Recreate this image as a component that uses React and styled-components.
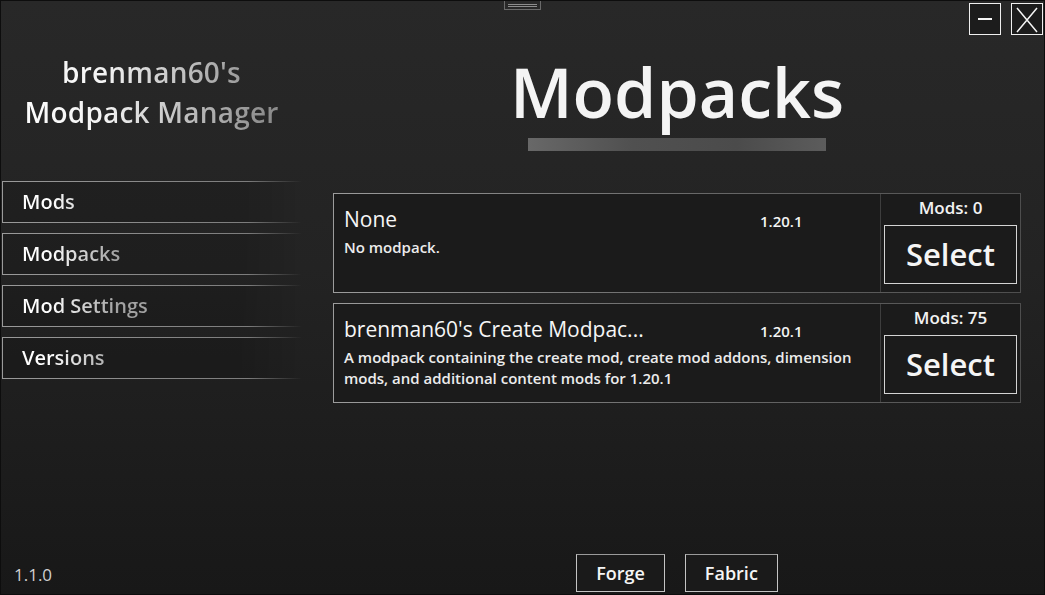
import React from "react";
import styled, { createGlobalStyle } from "styled-components";

const GlobalStyle = createGlobalStyle`
  html, body {
    margin: 0;
    padding: 0;
    background: #161616;
  }
  body {
    font-family: "Open Sans", "Noto Sans", sans-serif;
  }
  * {
    box-sizing: border-box;
  }
`;

const Window = styled.div`
  width: 1045px;
  height: 595px;
  border: 1px solid #0d0d0d;
  background: linear-gradient(to bottom, #282828 0%, #232323 45%, #181818 100%);
  display: grid;
  grid-template-columns: 332px 688px 1fr;
  grid-template-rows: 35px 1fr;
  color: #f3f3f3;
  overflow: hidden;
`;

const TopBar = styled.div`
  grid-column: 1 / -1;
  display: grid;
  grid-template-columns: 1fr auto 1fr;
  align-items: start;
`;

const Handle = styled.div`
  grid-column: 2;
  width: 37px;
  height: 9px;
  border: 1px solid #6a6a6a;
  border-top: none;
  display: flex;
  flex-direction: column;
  justify-content: center;
  gap: 1px;
  padding: 0 3px;

  span {
    height: 1px;
    background: #8c8c8c;
  }
`;

const Controls = styled.div`
  grid-column: 3;
  justify-self: end;
  display: flex;
  gap: 10px;
  margin: 2px 1px 0 0;
`;

const WinButton = styled.button`
  width: 32px;
  height: 32px;
  padding: 0;
  border: 1px solid #efefef;
  background: #1c1c1c;
  color: #f5f5f5;
  display: flex;
  align-items: center;
  justify-content: center;
`;

const Minus = styled.span`
  width: 14px;
  height: 2px;
  background: #f5f5f5;
`;

const CloseIcon = () => (
  <svg width="30" height="30" viewBox="0 0 30 30">
    <path d="M5 4 L25 28 M25 4 L5 28" stroke="#f5f5f5" strokeWidth="1.5" fill="none" />
  </svg>
);

const Sidebar = styled.div`
  grid-row: 2;
  display: flex;
  flex-direction: column;
  padding-top: 16px;
`;

const Title = styled.div`
  width: 301px;
  text-align: center;
  font-size: 28px;
  font-weight: 600;
  line-height: 40px;
  letter-spacing: 0.2px;
  background: linear-gradient(to right, #ffffff 0%, #f4f4f4 34%, #8c8c8c 88%);
  -webkit-background-clip: text;
  background-clip: text;
  color: transparent;
`;

const Nav = styled.nav`
  margin-top: 49px;
  display: flex;
  flex-direction: column;
  gap: 10px;
`;

const NavButton = styled.div`
  margin-left: 1px;
  width: 299px;
  height: 42px;
  border: 1px solid;
  border-right-width: 0;
  border-image: linear-gradient(to right, #9a9a9a 0%, #7c7c7c 82%, rgba(120, 120, 120, 0) 100%) 1;
  background: linear-gradient(to right, rgba(0, 0, 0, 0.14) 80%, rgba(0, 0, 0, 0) 100%);
  padding-left: 19px;
  font-size: 20px;
  font-weight: 600;
  line-height: 40px;

  span {
    background: linear-gradient(to right, #ffffff 0px, #ffffff 28px, #a2a2a2 95px);
    -webkit-background-clip: text;
    background-clip: text;
    color: transparent;
  }
`;

const AppVersion = styled.div`
  margin-top: auto;
  padding: 0 0 7px 13px;
  font-size: 17px;
  line-height: 24px;
  color: #d0d0d0;
`;

const Main = styled.main`
  grid-row: 2;
  display: flex;
  flex-direction: column;
  align-items: center;
`;

const Heading = styled.h1`
  margin: 21px 0 0;
  font-size: 68px;
  font-weight: 600;
  line-height: 70px;
  color: #f4f4f4;
`;

const Bar = styled.div`
  margin-top: 11px;
  width: 298px;
  height: 13px;
  background: linear-gradient(to right, #686868 0%, #505050 35%, #4b4b4b 70%, #5c5c5c 100%);
`;

const CardList = styled.div`
  width: 100%;
  margin-top: 42px;
  display: flex;
  flex-direction: column;
  gap: 10px;
`;

const Card = styled.div`
  height: 100px;
  border: 1px solid;
  border-image: linear-gradient(to right, #9c9c9c, #6a6a6a 50%, #4e4e4e) 1;
  background: #1b1b1b;
  display: grid;
  grid-template-columns: 1fr 140px;
`;

const Info = styled.div`
  padding: 13px 10px 0;
`;

const TitleRow = styled.div`
  display: grid;
  grid-template-columns: 416px auto;
  align-items: baseline;
`;

const PackName = styled.div`
  font-size: 21px;
  line-height: 24px;
  color: #f6f6f6;
  white-space: nowrap;
`;

const GameVersion = styled.div`
  font-size: 15px;
  font-weight: 600;
  color: #f4f4f4;
`;

const Description = styled.div`
  margin-top: 6px;
  font-size: 15px;
  font-weight: 600;
  line-height: 21px;
  color: #ececec;
`;

const Side = styled.div`
  border-left: 1px solid #3e3e3e;
  display: flex;
  flex-direction: column;
  align-items: center;
  padding-top: 4px;
`;

const ModCount = styled.div`
  font-size: 17px;
  font-weight: 600;
  line-height: 20px;
  color: #f2f2f2;
`;

const SelectButton = styled.button`
  margin-top: 7px;
  width: 133px;
  height: 59px;
  padding: 0;
  border: 1px solid #d4d4d4;
  background: #1b1b1b;
  color: #f5f5f5;
  font-family: "Open Sans", sans-serif;
  font-size: 31px;
  font-weight: 600;
  line-height: 57px;
`;

const Footer = styled.div`
  margin-top: auto;
  margin-bottom: 2px;
  display: flex;
  gap: 20px;
`;

const LoaderButton = styled.button`
  height: 38px;
  padding: 0 19px;
  border: 1px solid #c4c4c4;
  border-top-color: #9a9a9a;
  background: #1a1a1a;
  color: #f5f5f5;
  font-family: "Open Sans", sans-serif;
  font-size: 18px;
  font-weight: 600;
  line-height: 36px;
`;

const navItems = ["Mods", "Modpacks", "Mod Settings", "Versions"];

const packs = [
  { name: "None", version: "1.20.1", desc: "No modpack.", mods: 0 },
  {
    name: "brenman60's Create Modpac...",
    version: "1.20.1",
    desc: "A modpack containing the create mod, create mod addons, dimension mods, and additional content mods for 1.20.1",
    mods: 75,
  },
];

const App = () => {
  return (
    <>
      <GlobalStyle />
      <Window>
        <TopBar>
          <Handle>
            <span />
            <span />
          </Handle>
          <Controls>
            <WinButton aria-label="Minimize">
              <Minus />
            </WinButton>
            <WinButton aria-label="Close">
              <CloseIcon />
            </WinButton>
          </Controls>
        </TopBar>

        <Sidebar>
          <Title>
            brenman60's
            <br />
            Modpack Manager
          </Title>
          <Nav>
            {navItems.map((item) => (
              <NavButton key={item}>
                <span>{item}</span>
              </NavButton>
            ))}
          </Nav>
          <AppVersion>1.1.0</AppVersion>
        </Sidebar>

        <Main>
          <Heading>Modpacks</Heading>
          <Bar />
          <CardList>
            {packs.map((pack) => (
              <Card key={pack.name}>
                <Info>
                  <TitleRow>
                    <PackName>{pack.name}</PackName>
                    <GameVersion>{pack.version}</GameVersion>
                  </TitleRow>
                  <Description>{pack.desc}</Description>
                </Info>
                <Side>
                  <ModCount>Mods: {pack.mods}</ModCount>
                  <SelectButton>Select</SelectButton>
                </Side>
              </Card>
            ))}
          </CardList>
          <Footer>
            <LoaderButton>Forge</LoaderButton>
            <LoaderButton>Fabric</LoaderButton>
          </Footer>
        </Main>
      </Window>
    </>
  );
};

export default App;
